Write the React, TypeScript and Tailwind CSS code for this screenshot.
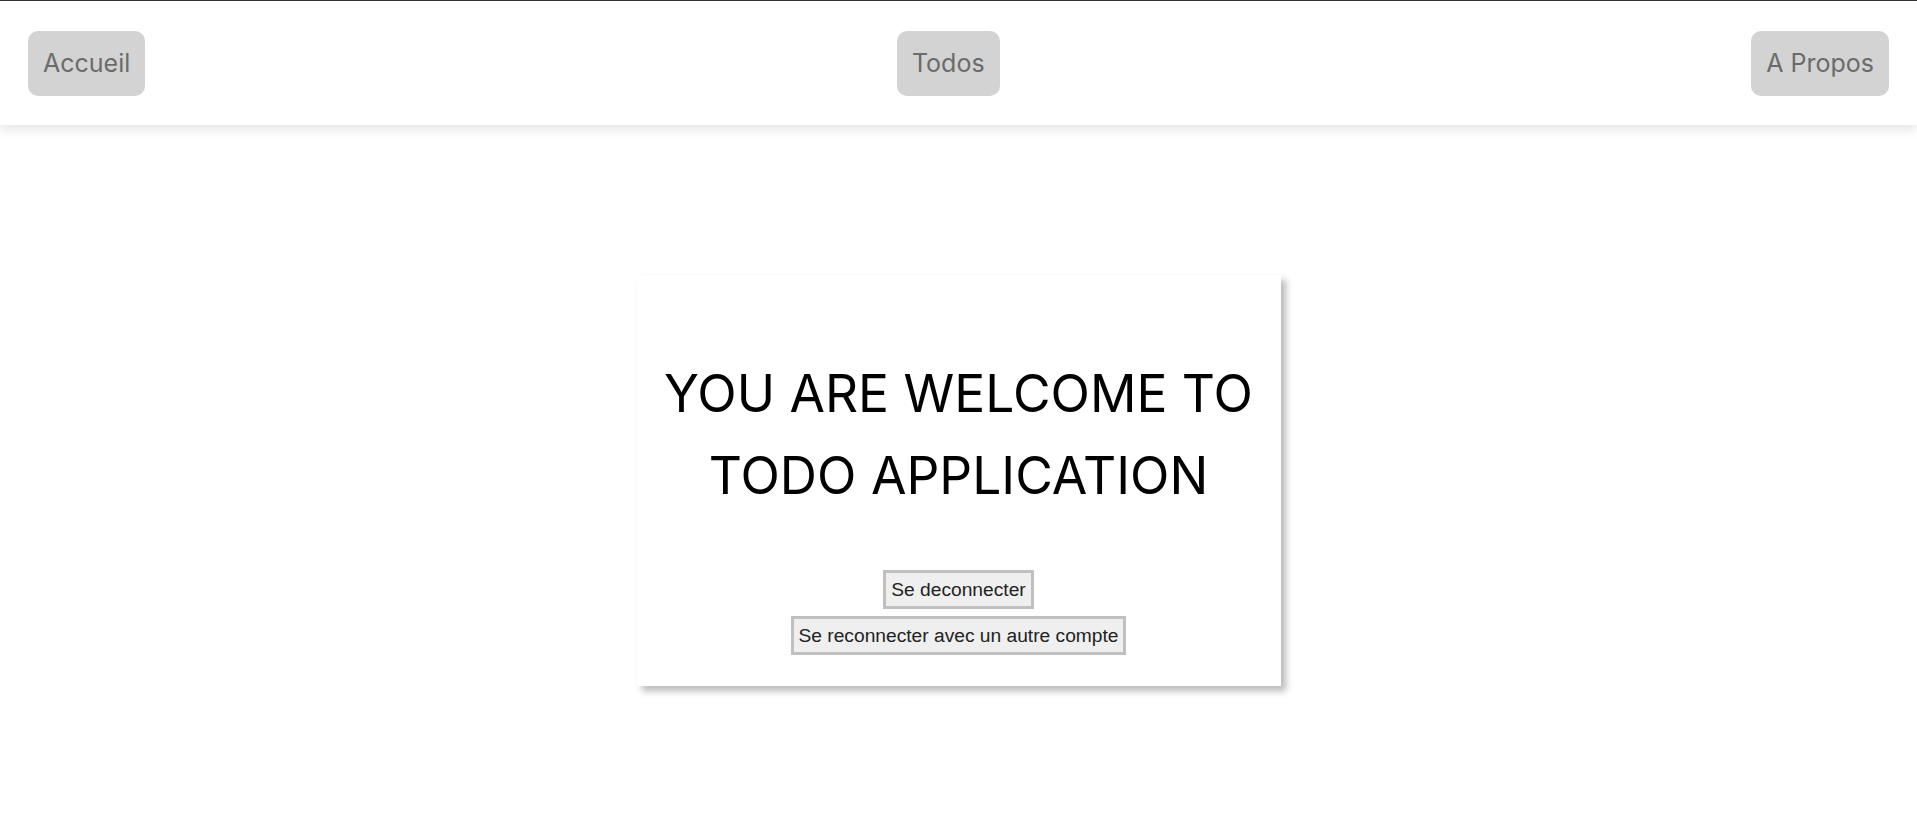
const navLinks = ["Accueil", "Todos", "A Propos"];

const NavBar = () => {
  return (
    <nav className="box-border flex h-[125px] w-full items-center justify-between border-t border-[#333333] bg-white px-[28px] shadow-[0_5px_10px_rgba(0,0,0,0.1)]">
      {navLinks.map((label) => (
        <button
          key={label}
          className="rounded-[10px] bg-[#d3d3d3] px-[15px] py-[16px] font-['Inter',sans-serif] text-[25px] leading-[33px] font-normal text-[#6b6b6b]"
        >
          {label}
        </button>
      ))}
    </nav>
  );
};

const WelcomeCard = () => {
  return (
    <div className="flex w-[644px] flex-col items-center bg-white pt-[77px] pb-[31px] shadow-[5px_5px_7px_rgba(0,0,0,0.28)]">
      <h1 className="text-center font-['Inter',sans-serif] text-[51.5px] leading-[82px] font-normal text-black">
        YOU ARE WELCOME TO
        <br />
        TODO APPLICATION
      </h1>
      <div className="mt-[54px] flex flex-col items-center gap-[7px]">
        <button className="border-[3px] border-[#c0c0c0] bg-[#efefef] px-[5px] py-[5px] font-['Liberation_Sans',Arial,sans-serif] text-[19.2px] leading-[23px] text-[#222]">
          Se deconnecter
        </button>
        <button className="border-[3px] border-[#c0c0c0] bg-[#efefef] px-[5px] py-[5px] font-['Liberation_Sans',Arial,sans-serif] text-[19.2px] leading-[23px] text-[#222]">
          Se reconnecter avec un autre compte
        </button>
      </div>
    </div>
  );
};

export default function App() {
  return (
    <div className="min-h-[825px] w-full bg-white">
      <NavBar />
      <main className="flex justify-center pt-[150px]">
        <WelcomeCard />
      </main>
    </div>
  );
}
